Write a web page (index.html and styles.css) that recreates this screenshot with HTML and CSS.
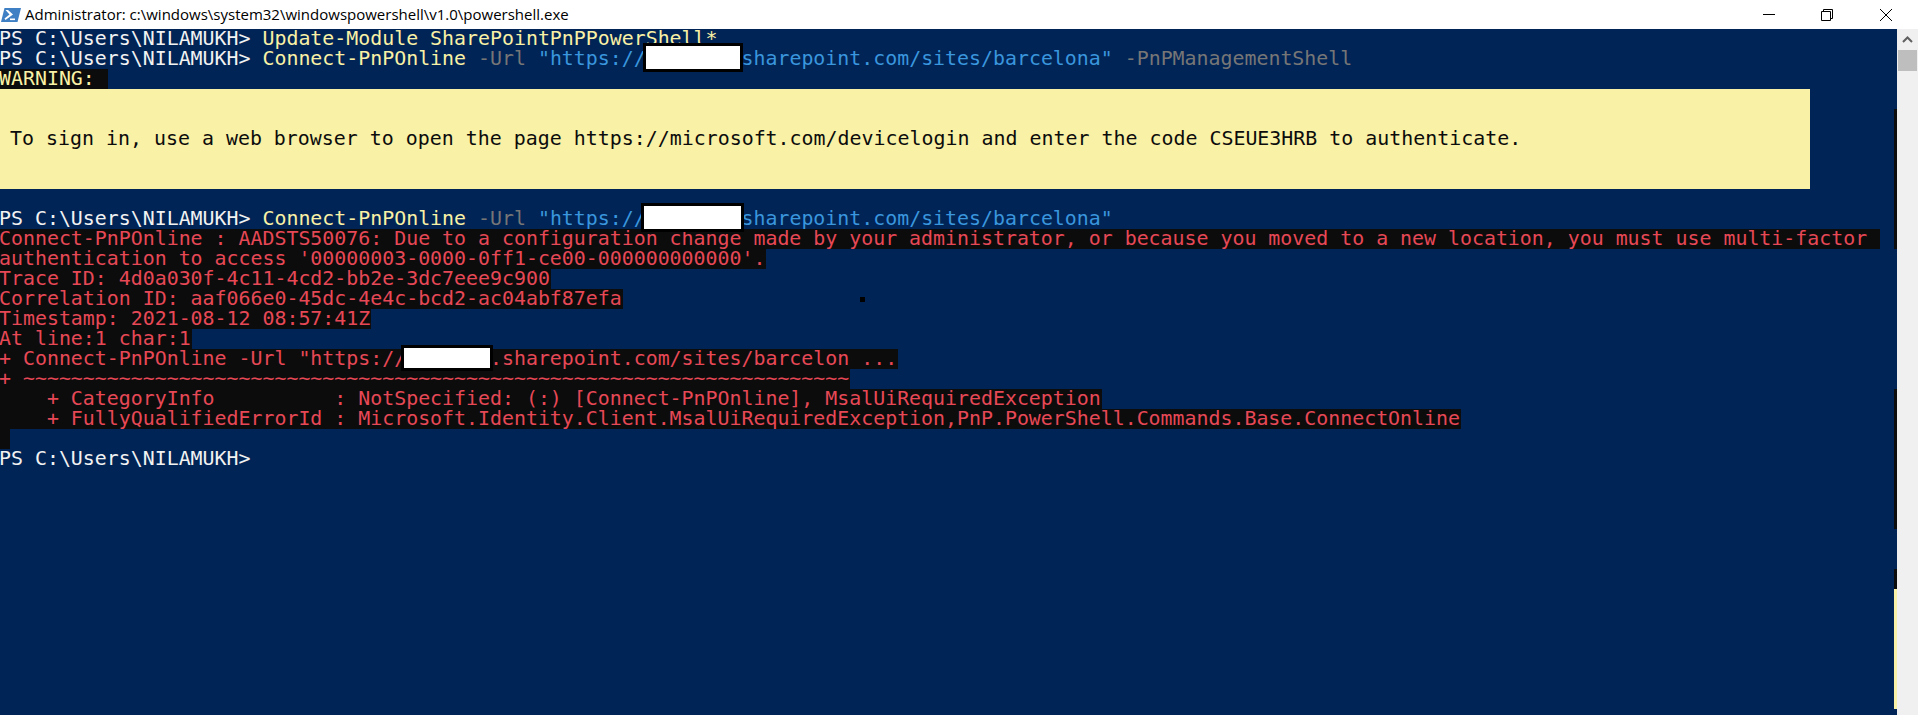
FILE: index.html
```html
<!DOCTYPE html>
<html lang="en">
<head>
<meta charset="utf-8">
<title>Administrator: c:\windows\system32\windowspowershell\v1.0\powershell.exe</title>
<link rel="stylesheet" href="styles.css">
</head>
<body>
<div class="window">
  <header class="titlebar">
    <svg class="app-icon" width="20" height="16" viewBox="0 0 20 16" aria-hidden="true">
      <polygon points="3.5,1 20,1 16.5,15 0,15" fill="#3f7fc4"/>
      <polygon points="4.5,3 7,3 12,7.5 4.5,13 3.5,11.5 8.5,7.5" fill="#fff"/>
      <rect x="9" y="11.5" width="5" height="1.6" fill="#fff"/>
    </svg>
    <span class="title">Administrator: c:\windows\system32\windowspowershell\v1.0\powershell.exe</span>
    <div class="controls">
      <span class="control"><svg width="14" height="14" viewBox="0 0 14 14" aria-hidden="true"><path d="M1 6.5h12" stroke="#000" fill="none"/></svg></span>
      <span class="control"><svg width="14" height="14" viewBox="0 0 14 14" aria-hidden="true"><path d="M1.5 3.5h9v9h-9zM3.5 3.5v-2h9v9h-2" stroke="#000" fill="none"/></svg></span>
      <span class="control"><svg width="14" height="14" viewBox="0 0 14 14" aria-hidden="true"><path d="M1 1l12 12M13 1L1 13" stroke="#000" fill="none"/></svg></span>
    </div>
  </header>
  <div class="main">
    <main class="console">
      <div class="line"><span class="w">PS C:\Users\NILAMUKH&gt; </span><span class="y">Update-Module SharePointPnPPowerShell*</span></div>
      <div class="line"><span class="w">PS C:\Users\NILAMUKH&gt; </span><span class="y">Connect-PnPOnline</span> <span class="g">-Url</span> <span class="b">"https://        sharepoint.com/sites/barcelona"</span> <span class="g">-PnPManagementShell</span></div>
      <div class="line"><span class="warn">WARNING: </span></div>
      <div class="notice">To sign in, use a web browser to open the page https://microsoft.com/devicelogin and enter the code CSEUE3HRB to authenticate.</div>
      <div class="line"> </div>
      <div class="line"><span class="w">PS C:\Users\NILAMUKH&gt; </span><span class="y">Connect-PnPOnline</span> <span class="g">-Url</span> <span class="b">"https://        sharepoint.com/sites/barcelona"</span></div>
      <div class="line"><span class="err">Connect-PnPOnline : AADSTS50076: Due to a configuration change made by your administrator, or because you moved to a new location, you must use multi-factor </span></div>
      <div class="line"><span class="err">authentication to access '00000003-0000-0ff1-ce00-000000000000'.</span></div>
      <div class="line"><span class="err">Trace ID: 4d0a030f-4c11-4cd2-bb2e-3dc7eee9c900</span></div>
      <div class="line"><span class="err">Correlation ID: aaf066e0-45dc-4e4c-bcd2-ac04abf87efa</span></div>
      <div class="line"><span class="err">Timestamp: 2021-08-12 08:57:41Z</span></div>
      <div class="line"><span class="err">At line:1 char:1</span></div>
      <div class="line"><span class="err">+ Connect-PnPOnline -Url "https://       .sharepoint.com/sites/barcelon ...</span></div>
      <div class="line"><span class="err">+ ~~~~~~~~~~~~~~~~~~~~~~~~~~~~~~~~~~~~~~~~~~~~~~~~~~~~~~~~~~~~~~~~~~~~~</span></div>
      <div class="line"><span class="err">    + CategoryInfo          : NotSpecified: (:) [Connect-PnPOnline], MsalUiRequiredException</span></div>
      <div class="line"><span class="err">    + FullyQualifiedErrorId : Microsoft.Identity.Client.MsalUiRequiredException,PnP.PowerShell.Commands.Base.ConnectOnline</span></div>
      <div class="line"><span class="gap"></span></div>
      <div class="line"><span class="w">PS C:\Users\NILAMUKH&gt;</span></div>
      <div class="redact r1"></div>
      <div class="redact r2"></div>
      <div class="redact r3"></div>
      <div class="speck"></div>
      <div class="edge e1"></div>
      <div class="edge e2"></div>
      <div class="edge e3"></div>
      <div class="edge e4"></div>
    </main>
    <aside class="scrollbar">
      <svg class="arrow" width="11" height="9" viewBox="0 0 11 9" aria-hidden="true"><path d="M1 7l4.5-4.5L10 7" stroke="#606060" stroke-width="2" fill="none"/></svg>
      <div class="thumb"></div>
    </aside>
  </div>
</div>
</body>
</html>
```
FILE: styles.css
```css
html, body {
  margin: 0;
  height: 100%;
  overflow: hidden;
  background: #012456;
}

.window {
  display: flex;
  flex-direction: column;
  height: 715px;
}

.titlebar {
  position: relative;
  z-index: 1;
  display: flex;
  align-items: center;
  height: 29px;
  flex: none;
  background: #fff;
  padding-right: 3px;
  box-sizing: border-box;
}

.app-icon {
  margin-left: 1px;
  flex: none;
}

.title {
  margin-left: 4px;
  font: 15px/29px "Open Sans", sans-serif;
  color: #000;
  white-space: nowrap;
}

.controls {
  display: flex;
  margin-left: auto;
}

.control {
  display: flex;
  align-items: center;
  justify-content: center;
  width: 58.5px;
  height: 29px;
}

.main {
  display: flex;
  flex: 1;
  min-height: 0;
}

.console {
  position: relative;
  flex: 1;
  background: #012456;
  font: 19.9px/20px "DejaVu Sans Mono", monospace;
  color: #f2f2f2;
}

.line {
  height: 20px;
  white-space: pre;
  margin-left: -1px;
}

.w { color: #f2f2f2; }
.y { color: #f9f1a5; }
.g { color: #767676; }
.b { color: #3a96dd; }

.warn {
  color: #f9f1a5;
  background: #0c0c0c;
  display: inline-block;
  height: 20px;
  padding-right: 1px;
}

.err {
  color: #e74856;
  background: #0c0c0c;
  display: inline-block;
  height: 20px;
  padding-right: 1px;
}

.gap {
  display: inline-block;
  width: 11px;
  height: 20px;
  background: #0c0c0c;
}

.notice {
  display: flex;
  align-items: center;
  width: 1810px;
  height: 100px;
  box-sizing: border-box;
  padding-left: 10px;
  background: #f9f1a5;
  color: #0c0c0c;
  font-size: 19.93px;
  white-space: pre;
}

.redact {
  position: absolute;
  box-sizing: border-box;
  background: #fff;
  border: 3px solid #000;
}

.r1 { left: 643px; top: 14px; width: 100px; height: 29px; }
.r2 { left: 641px; top: 174px; width: 103px; height: 29px; }
.r3 { left: 401px; top: 316px; width: 92px; height: 26px; }

.speck {
  position: absolute;
  left: 860px;
  top: 268px;
  width: 5px;
  height: 5px;
  background: #000;
}

.edge {
  position: absolute;
  right: 0;
  width: 3px;
  background: #0c0c0c;
}

.e1 { top: 80px; height: 140px; }
.e2 { top: 360px; height: 140px; }
.e3 { top: 540px; height: 20px; }
.e4 { top: 560px; height: 120px; background: #f9f1a5; }

.scrollbar {
  position: relative;
  flex: none;
  width: 21px;
  background: #f0f0f0;
  display: flex;
  flex-direction: column;
  align-items: center;
}

.arrow {
  margin-top: 6px;
  flex: none;
}

.thumb {
  width: 19px;
  height: 21px;
  margin-top: 6px;
  background: #bebebe;
}
```
